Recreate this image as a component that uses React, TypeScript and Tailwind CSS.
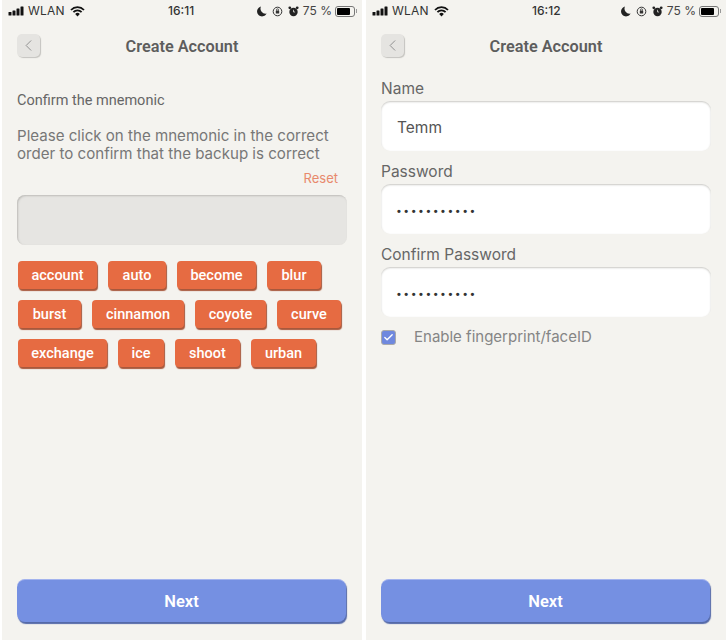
import * as React from 'react';
import { Check, ChevronLeft } from 'lucide-react';

const wordRows = [
  [['account', 79], ['auto', 58], ['become', 79], ['blur', 54]],
  [['burst', 63], ['cinnamon', 92], ['coyote', 71], ['curve', 64]],
  [['exchange', 89], ['ice', 46], ['shoot', 65], ['urban', 65]],
] as [string, number][][];

function StatusBar({ time }: { time: string }) {
  return (
    <div className="flex h-[21px] items-center pl-[6px] pr-[5px] pt-[1px] text-[12px] leading-none text-[#333] font-['Inter',sans-serif]">
      <div className="flex w-[160px] items-center">
        <svg width="16" height="10" viewBox="0 0 16 10" className="mr-[4px] shrink-0">
          <rect x="0.5" y="6" width="3" height="3.5" rx="0.5" fill="#111" />
          <rect x="4.5" y="4.5" width="3" height="5" rx="0.5" fill="#111" />
          <rect x="8.5" y="2.5" width="3" height="7" rx="0.5" fill="#111" />
          <rect x="12.5" y="0.5" width="3" height="9" rx="0.5" fill="#111" />
        </svg>
        <span className="tracking-[0.2px]">WLAN</span>
        <svg width="15" height="11" viewBox="0 0 15 11" className="ml-[5px]">
          <path d="M1 4a9 9 0 0 1 13 0" fill="none" stroke="#111" strokeWidth="1.8" />
          <path d="M3.4 6.2a5.6 5.6 0 0 1 8.2 0" fill="none" stroke="#111" strokeWidth="1.8" />
          <path d="M7.5 10.5 5.2 8a3.2 3.2 0 0 1 4.6 0z" fill="#111" />
        </svg>
      </div>
      <span className="w-[29px] font-medium whitespace-nowrap">{time}</span>
      <div className="ml-auto flex items-center">
        <svg width="10" height="11" viewBox="0 0 10 11" className="mr-[5px]">
          <path d="M4 .5a5 5 0 1 0 5.6 7A5 5 0 0 1 4 .5z" fill="#222" />
        </svg>
        <svg width="11" height="11" viewBox="0 0 11 11" className="mr-[5px]">
          <circle cx="5.5" cy="5.5" r="4.3" fill="none" stroke="#333" strokeWidth="1" />
          <rect x="3.8" y="4.6" width="3.4" height="3" rx="0.5" fill="#333" />
          <path d="M4.5 4.6V3.8a1 1 0 0 1 2 0v.8" fill="none" stroke="#333" strokeWidth="0.8" />
        </svg>
        <svg width="11" height="11" viewBox="0 0 11 11" className="mr-[4px]">
          <circle cx="5.5" cy="6" r="4.2" fill="#222" />
          <circle cx="1.8" cy="1.8" r="1.4" fill="#222" />
          <circle cx="9.2" cy="1.8" r="1.4" fill="#222" />
          <path d="M5.5 3.8V6h1.6" fill="none" stroke="#f4f3ef" strokeWidth="0.7" />
        </svg>
        <span className="mr-[3px] whitespace-nowrap text-[#444]">75 %</span>
        <div className="flex h-[11px] w-[20px] items-center rounded-[3px] border border-[#777] p-[1px]">
          <div className="h-full w-[13px] rounded-[1px] bg-black" />
        </div>
        <div className="ml-[1px] h-[4px] w-[1px] bg-[#999]" />
      </div>
    </div>
  );
}

function Header() {
  return (
    <div className="relative mt-[14px] flex h-[24px] items-center justify-center">
      <button className="absolute left-[15px] top-[-1px] flex h-[23px] w-[23px] items-center justify-center rounded-[5px] bg-[#e5e4e1] shadow-[1px_1px_1px_#c4c3bf]">
        <ChevronLeft className="h-[19px] w-[19px] text-[#8c8c8c]" strokeWidth={1.2} />
      </button>
      <h1 className="text-[16.3px] font-semibold text-[#5d5d5d] font-['Roboto',sans-serif]">Create Account</h1>
    </div>
  );
}

function NextButton() {
  return (
    <button className="mx-[15px] mb-[18px] mt-auto h-[43px] w-[329px] shrink-0 rounded-[8px] border-t border-t-[#a3b3ee] bg-[#7590e2] pt-[3px] text-[16.5px] font-semibold text-white shadow-[1px_2px_1px_#5469a8] font-['Roboto',sans-serif]">
      Next
    </button>
  );
}

function Field({ label, value, secret }: { label: string; value: string; secret?: boolean }) {
  return (
    <div>
      <div className="mb-[2px] h-[20px] text-[15.5px] leading-[20px] text-[#666] font-['Inter',sans-serif]">{label}</div>
      <div className="flex h-[50px] w-[330px] items-center rounded-[9px] bg-white px-[16px] shadow-[inset_0_1px_2px_#c9c8c4]">
        {secret ? (
          <span className="pt-[4px] text-[11px] font-bold tracking-[3.5px] text-[#333] font-['Liberation_Sans',sans-serif]">{value}</span>
        ) : (
          <span className="pt-[3px] text-[15.5px] text-[#555] font-['Inter',sans-serif]">{value}</span>
        )}
      </div>
    </div>
  );
}

export default function App() {
  return (
    <div className="flex h-[640px] w-[728px] bg-white">
      <div className="ml-[2px] flex h-full w-[360px] flex-col bg-[#f4f3ef]">
        <StatusBar time="16:11" />
        <Header />
        <div className="px-[15px]">
          <p className="mt-[32px] h-[20px] text-[14.5px] leading-[20px] text-[#666] font-['Roboto',sans-serif]">Confirm the mnemonic</p>
          <p className="mt-[16px] text-[15.1px] leading-[18px] text-[#777] font-['Inter',sans-serif] whitespace-nowrap">
            Please click on the mnemonic in the correct
            <br />
            order to confirm that the backup is correct
          </p>
          <div className="mt-[6px] mr-[9px] text-right text-[13px] leading-[18px] text-[#e8896c] font-['Inter',sans-serif]">Reset</div>
          <div className="mt-[8px] h-[50px] w-[330px] rounded-[8px] bg-[#e6e5e2] shadow-[inset_1px_1px_2px_#bdbcb8]" />
          <div className="mt-[16px] flex flex-col gap-[11px] pl-[1px]">
            {wordRows.map((row, i) => (
              <div key={i} className="flex gap-[11px]">
                {row.map(([word, width]) => (
                  <div
                    key={word}
                    style={{ width }}
                    className="flex h-[28px] items-center justify-center rounded-[4px] bg-[#e66b42] pt-[1px] text-[14.5px] font-medium text-white shadow-[1px_2px_1px_#a8583c] font-['Roboto',sans-serif]"
                  >
                    {word}
                  </div>
                ))}
              </div>
            ))}
          </div>
        </div>
        <NextButton />
      </div>

      <div className="ml-[4px] flex h-full w-[360px] flex-col bg-[#f4f3ef]">
        <StatusBar time="16:12" />
        <Header />
        <div className="mt-[20px] flex flex-col gap-[3px] px-[15px]">
          <Field label="Name" value="Temm" />
          <div className="mt-[8px]">
            <Field label="Password" value="•••••••••••" secret />
          </div>
          <div className="mt-[8px]">
            <Field label="Confirm Password" value="•••••••••••" secret />
          </div>
          <div className="mt-[6px] flex items-center">
            <div className="flex h-[15px] w-[15px] items-center justify-center rounded-[3px] border border-[#aaa] bg-[#6f88de]">
              <Check className="h-[11px] w-[11px] text-white" strokeWidth={3} />
            </div>
            <span className="ml-[18px] text-[15px] text-[#858585] font-['Inter',sans-serif]">Enable fingerprint/faceID</span>
          </div>
        </div>
        <NextButton />
      </div>
    </div>
  );
}
